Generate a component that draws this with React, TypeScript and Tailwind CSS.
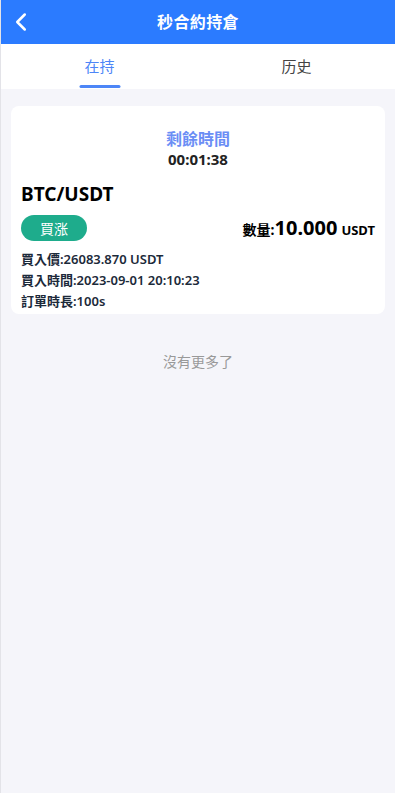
import { ChevronLeft } from 'lucide-react';

const font = { fontFamily: '"Noto Sans", "Noto Sans CJK TC", sans-serif' };

export default function App() {
  return (
    <div
      className="min-h-[793px] w-full bg-[#f5f5fa] border-l border-[#e3e3e8] flex flex-col"
      style={font}
    >
      {/* Header */}
      <div className="relative h-[44px] bg-[#2b7bff] flex items-center justify-center">
        <button className="absolute left-[5px] top-[7px] text-white">
          <ChevronLeft className="w-[30px] h-[30px]" strokeWidth={2} />
        </button>
        <h1 className="text-white text-[16px] font-bold tracking-wide">秒合約持倉</h1>
      </div>

      {/* Tabs */}
      <div className="h-[45px] bg-white flex">
        <div className="flex-1 relative flex items-center justify-center">
          <span className="text-[15px] text-[#4d86f7]">在持</span>
          <span className="absolute bottom-[1px] left-1/2 -translate-x-1/2 w-[41px] h-[3px] rounded-full bg-[#4d86f7]" />
        </div>
        <div className="flex-1 flex items-center justify-center">
          <span className="text-[15px] text-[#444]">历史</span>
        </div>
      </div>

      {/* List */}
      <div className="px-[10px] pt-[17px]">
        <div className="bg-white rounded-[8px] px-[10px] pt-[23px] pb-[2px]">
          <div className="text-center">
            <div className="text-[16px] leading-[20px] font-bold text-[#6b8ef5]">剩餘時間</div>
            <div className="text-[15px] leading-[20px] font-bold text-[#222]">00:01:38</div>
          </div>
          <div className="mt-[11px] text-[19px] leading-[28px] font-bold text-black">BTC/USDT</div>
          <div className="mt-[7px] flex items-end justify-between">
            <button className="w-[66px] h-[26px] rounded-full bg-[#1eac8c] text-white text-[14px]">
              買涨
            </button>
            <div className="flex items-baseline text-black font-bold">
              <span className="text-[14px]">數量:</span>
              <span className="text-[20px] leading-[26px]">10.000</span>
              <span className="text-[13px] ml-[4px]">USDT</span>
            </div>
          </div>
          <div className="mt-[8px] text-[13px] leading-[21px] font-semibold text-[#1c2a3a]">
            <div>買入價:26083.870 USDT</div>
            <div>買入時間:2023-09-01 20:10:23</div>
            <div>訂單時長:100s</div>
          </div>
        </div>
      </div>

      <div className="mt-[37px] text-center text-[14px] text-[#999]">沒有更多了</div>
    </div>
  );
}
